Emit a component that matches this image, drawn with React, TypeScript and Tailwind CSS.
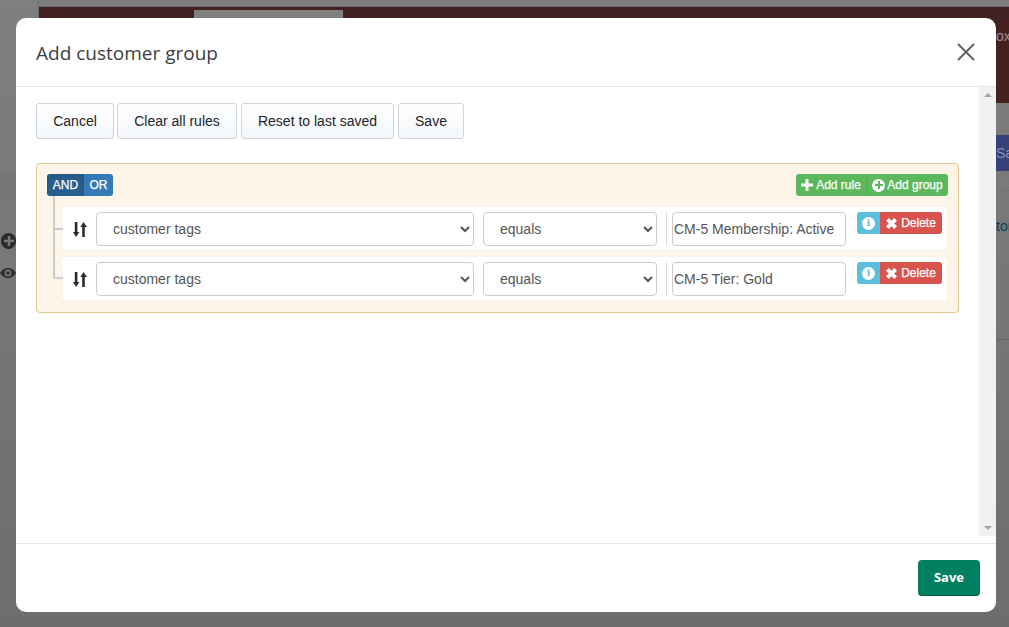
const sans = "font-['Liberation_Sans',Arial,sans-serif]"
const heavy = '[-webkit-text-stroke:0.25px_white]'

function ToolbarButton({ label, width }: { label: string; width: string }) {
  return (
    <button className={`h-9 rounded-[3px] border border-[#ccd6e0] bg-gradient-to-b from-white to-[#f3f6f9] text-sm text-[#212529] ${width}`}>
      {label}
    </button>
  )
}

function SortIcon() {
  return (
    <svg width="14" height="15" viewBox="0 0 14 15" fill="#2b2b2b">
      <path d="M1.800 0h2.600v10h2L3.100 15 0 10h1.800z" />
      <path d="M9.200 15h2.600V5H14L10.500 0 7.300 5h1.900z" />
    </svg>
  )
}

function ChunkyPlus({ size, color = '#fff' }: { size: number; color?: string }) {
  return (
    <svg width={size} height={size} viewBox="0 0 12 12" fill={color}>
      <path d="M4.500 0h3v4.500H12v3H7.500V12h-3V7.500H0v-3h4.500z" />
    </svg>
  )
}

function ChunkyCross() {
  return (
    <svg width="11" height="11" viewBox="0 0 12 12" fill="#fff">
      <path d="M3 0 6 3l3-3 3 3-3 3 3 3-3 3-3-3-3 3-3-3 3-3-3-3z" />
    </svg>
  )
}

function Rule({ value }: { value: string }) {
  return (
    <div className="flex h-[45px] rounded-[4px] border border-[#f6f3ec] bg-white pl-[9px] pr-[5px] pt-[5px]">
      <div className="flex h-[34px] w-[25px] shrink-0 items-center pl-[2px]">
        <SortIcon />
      </div>
      <select className="h-[34px] w-[378px] rounded-[4px] border border-[#ccc] bg-white pl-3 text-sm text-[#555]">
        <option>customer tags</option>
      </select>
      <select className="ml-[9px] h-[34px] w-[174px] rounded-[4px] border border-[#ccc] bg-white pl-3 text-sm text-[#555]">
        <option>equals</option>
      </select>
      <div className="ml-[9px] h-[34px] w-px bg-[#ddd]" />
      <input
        readOnly
        value={value}
        className="ml-[5px] h-[34px] w-[174px] rounded-[4px] border border-[#ccc] bg-white pl-[1px] text-sm text-[#555] outline-none"
      />
      <div className={`ml-[11px] flex h-[22px] text-xs text-white ${heavy}`}>
        <span className="flex w-[23px] items-center justify-center rounded-l-[3px] bg-[#5bc0de]">
          <span className="flex h-[13px] w-[13px] items-center justify-center rounded-full bg-white">
            <span className="font-['DejaVu_Serif',serif] text-[9px] font-bold leading-none text-[#5bc0de] [-webkit-text-stroke:0]">i</span>
          </span>
        </span>
        <span className="flex w-[62px] items-center justify-center gap-[4px] rounded-r-[3px] bg-[#d9534f]">
          <ChunkyCross />
          Delete
        </span>
      </div>
    </div>
  )
}

export default function App() {
  return (
    <div className={`relative h-[627px] w-[1009px] overflow-hidden bg-gradient-to-b from-[#7f7f7f] to-[#6c6d6d] ${sans}`}>
      {/* page behind the backdrop */}
      <div className="absolute left-[38px] top-0 h-full w-px bg-[#6a6a6a]" />
      <div className="absolute left-[39px] right-0 top-[6px] h-px bg-[#6b6b6b]" />
      <div className="absolute left-[39px] right-0 top-[7px] h-[96px] bg-[#452222]" />
      <div className="absolute left-[194px] top-[10px] h-[8px] w-[149px] bg-[#808080]" />
      <div className="absolute left-[996px] top-[26px] text-sm text-[#9a8f8f]">ox</div>
      <div className="absolute left-[996px] top-[135px] h-[36px] w-[13px] overflow-hidden bg-[#35427a] text-sm leading-[36px] text-[#8a93b8]">Sa</div>
      <div className="absolute left-[996px] top-[190px] h-px w-[13px] bg-[#6f6f6f]" />
      <div className="absolute left-[996px] top-[216px] text-sm text-[#0d3a55]">tor</div>
      <div className="absolute left-[996px] top-[339px] h-px w-[13px] bg-[#666]" />
      <div className="absolute left-0 top-[172px] h-[33px] w-[38px] bg-[#777]" />
      <div className="absolute left-[1px] top-[233px] flex h-[16px] w-[15px] items-center justify-center rounded-full bg-[#2b2b2b]">
        <ChunkyPlus size={10} color="#777" />
      </div>
      <svg className="absolute left-0 top-[265px]" width="16" height="16" viewBox="0 0 16 16">
        <path d="M0 8c2-3.500 5-5 8-5s6 1.500 8 5c-2 3.500-5 5-8 5s-6-1.500-8-5z" fill="#2b2b2b" />
        <circle cx="8" cy="8" r="3.500" fill="#777" />
        <circle cx="8" cy="8" r="1.800" fill="#2b2b2b" />
      </svg>

      {/* modal */}
      <div className="absolute left-4 top-[18px] flex h-[594px] w-[980px] flex-col overflow-hidden rounded-[10px] bg-white">
        <div className="flex h-[69px] shrink-0 items-center justify-between border-b border-[#e3e6e8] pl-5 pr-5">
          <h1 className="mt-[2px] font-['Open_Sans',sans-serif] text-[19px] text-[#3c4043]">Add customer group</h1>
          <svg width="20" height="20" viewBox="0 0 20 20" className="text-[#5f6368]">
            <path d="M2 2l16 16M18 2L2 18" stroke="currentColor" strokeWidth="2" fill="none" />
          </svg>
        </div>

        <div className="flex min-h-0 flex-1">
          <div className="min-w-0 flex-1 pl-5 pr-[20px] pt-4">
            <div className="flex gap-[3px]">
              <ToolbarButton label="Cancel" width="w-[78px]" />
              <ToolbarButton label="Clear all rules" width="w-[120px]" />
              <div className="ml-px flex gap-1">
                <ToolbarButton label="Reset to last saved" width="w-[153px]" />
                <ToolbarButton label="Save" width="w-[66px]" />
              </div>
            </div>

            <div className="relative mt-6 h-[150px] rounded-[4px] border border-[#dfc78e] bg-[#fcf5e8] px-[10px] pt-[10px]">
              {/* tree lines */}
              <div className="absolute left-4 top-[32px] h-[83px] w-[10px] rounded-bl-[3px] border-b-2 border-l-2 border-[#ccc]" />
              <div className="absolute left-4 top-[64px] h-[2px] w-[10px] bg-[#ccc]" />

              <div className="flex items-start justify-between">
                <div className={`flex h-[22px] text-xs leading-[22px] text-white ${heavy}`}>
                  <span className="w-[37px] rounded-l-[3px] bg-[#285e8e] text-center shadow-[inset_0_2px_4px_rgba(0,0,0,0.12)]">AND</span>
                  <span className="w-[29px] rounded-r-[3px] bg-[#337ab7] text-center">OR</span>
                </div>
                <div className={`flex h-[22px] rounded-[3px] bg-[#5cb85c] text-xs text-white ${heavy}`}>
                  <span className="flex w-[71px] items-center justify-center gap-[3px] border-r border-[#4cae4c]">
                    <ChunkyPlus size={12} />
                    Add rule
                  </span>
                  <span className="flex w-[81px] items-center justify-center gap-[2px]">
                    <span className="flex h-[13px] w-[13px] items-center justify-center rounded-full bg-white">
                      <ChunkyPlus size={8} color="#5cb85c" />
                    </span>
                    Add group
                  </span>
                </div>
              </div>

              <div className="ml-[14px] mt-[10px] flex w-[887px] flex-col gap-[5px]">
                <Rule value="CM-5 Membership: Active" />
                <Rule value="CM-5 Tier: Gold" />
              </div>
            </div>
          </div>

          {/* scrollbar */}
          <div className="flex h-[449px] w-[17px] shrink-0 flex-col items-center justify-between self-start bg-[#f1f1f1] py-[6px]">
            <div className="h-0 w-0 border-x-[4px] border-b-[4px] border-x-transparent border-b-[#a3a3a3]" />
            <div className="h-0 w-0 border-x-[4px] border-t-[4px] border-x-transparent border-t-[#a3a3a3]" />
          </div>
        </div>

        <div className="flex h-[69px] shrink-0 items-start justify-end border-t border-[#e3e6e8] pr-4 pt-4">
          <button className="h-9 w-[62px] rounded-[4px] border-b border-[#05603f] bg-[#008060] font-['Open_Sans',sans-serif] text-[13px] font-bold text-white">
            Save
          </button>
        </div>
      </div>
    </div>
  )
}
